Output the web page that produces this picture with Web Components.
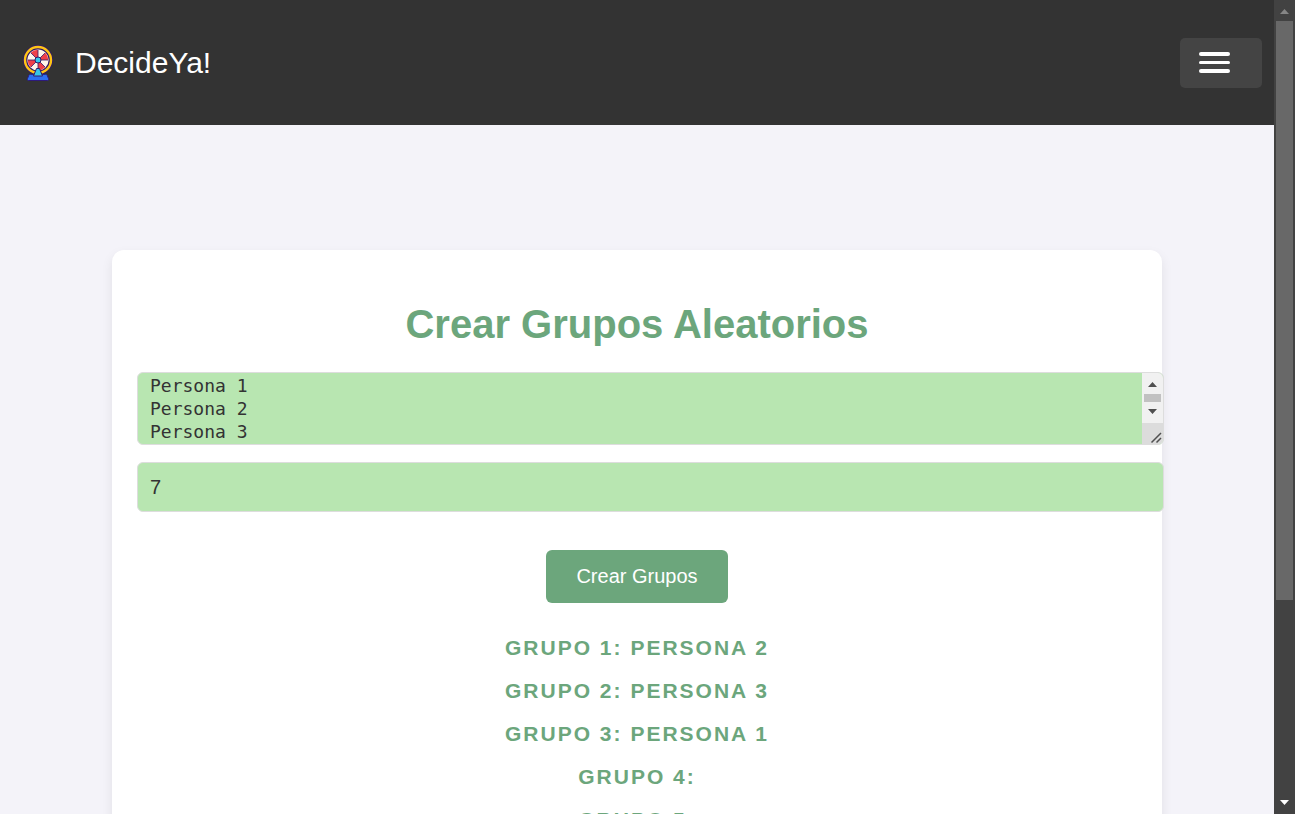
<!DOCTYPE html>
<html lang="es">
<head>
<meta charset="utf-8">
<title>DecideYa!</title>
<style>
body { margin: 0; font-family: "Liberation Sans", Arial, sans-serif; color: #333; }
</style>
</head>
<body>
<decide-app></decide-app>

<template id="t-app">
  <style>
    :host { display: flex; height: 100vh; overflow: hidden; background: #f4f3f9; }
    .page { flex: 1; min-width: 0; overflow: hidden; display: flex; flex-direction: column; }
    main { flex: 1; min-height: 0; padding: 125px 112px 0; }
  </style>
  <div class="page">
    <site-header></site-header>
    <main>
      <group-card>
        <span slot="title">Crear Grupos Aleatorios</span>
        <group-result>Grupo 1: Persona 2</group-result>
        <group-result>Grupo 2: Persona 3</group-result>
        <group-result>Grupo 3: Persona 1</group-result>
        <group-result>Grupo 4:</group-result>
        <group-result>Grupo 5:</group-result>
      </group-card>
    </main>
  </div>
  <page-scrollbar></page-scrollbar>
</template>

<template id="t-header">
  <style>
    :host { display: flex; align-items: center; justify-content: space-between; height: 125px; box-sizing: border-box; padding: 0 12px 0 20px; background: #333; flex: none; }
    a { display: flex; align-items: center; gap: 19px; color: #fff; text-decoration: none; font-size: 30px; line-height: 36px; }
    svg { display: block; }
    button { display: flex; align-items: center; width: 82px; height: 50px; margin: 0; padding: 0 0 0 19px; border: 0; border-radius: 5px; background: #444; }
  </style>
  <a href="#">
    <svg width="36" height="36" viewBox="0 0 36 36" aria-hidden="true">
      <path d="M8.500 35.500c-1.200 0-1.400-1-1-2l1.200-3c.3-.8 1-1.200 1.800-1.200h15c.8 0 1.500.4 1.800 1.200l1.200 3c.4 1 .2 2-1 2z" fill="#2b6ff0" stroke="#2d1a7b" stroke-width="1"/>
      <circle cx="18" cy="15" r="12.800" fill="#fff4e8" stroke="#331a68" stroke-width="4.400"/>
      <circle cx="18" cy="15" r="13" fill="none" stroke="#ffc515" stroke-width="2.400"/>
      <g fill="#ef4048">
        <path d="M18 15L10.700 7.700A10.300 10.300 0 0 1 18 4.700z"/>
        <path d="M18 15L25.300 7.700A10.300 10.300 0 0 1 28.300 15z"/>
        <path d="M18 15L25.300 22.300A10.300 10.300 0 0 1 18 25.300z"/>
        <path d="M18 15L10.700 22.300A10.300 10.300 0 0 1 7.700 15z"/>
      </g>
      <path d="M8 15h20M18 5v20M11 8l14 14M25 8L11 22" stroke="#331a68" stroke-width=".8"/>
      <path d="M16.500 23.500h3l3 7.500h-9z" fill="#35c7e8" stroke="#331a68" stroke-width="1"/>
      <circle cx="18" cy="15" r="3" fill="#35c7e8" stroke="#331a68" stroke-width="1"/>
    </svg>
    <span>DecideYa!</span>
  </a>
  <button type="button" aria-label="Menú">
    <svg width="31" height="22" viewBox="0 0 31 22" fill="#fff" aria-hidden="true">
      <rect width="31" height="4" rx="2"/><rect y="9" width="31" height="3" rx="1.500"/><rect y="17" width="31" height="4" rx="2"/>
    </svg>
  </button>
</template>

<template id="t-card">
  <style>
    :host { display: block; box-sizing: border-box; padding: 50px 25px; border-radius: 12px; background: #fff; box-shadow: 0 5px 12px rgba(0, 0, 0, .08); }
    h1 { margin: 0 0 24px; font-size: 40px; line-height: 48px; text-align: center; color: #6ca67c; }
    people-box { margin-bottom: 17px; }
    input { display: block; box-sizing: content-box; width: 100%; height: 48px; margin: 0; padding: 0 13px 0 12px; border: 1px solid #ddd; border-radius: 6px; background: #b8e6b1; color: #333; font: 20px "Liberation Sans", Arial, sans-serif; appearance: textfield; outline: 0; }
    input::-webkit-inner-spin-button { appearance: none; margin: 0; }
    button { display: block; height: 53px; margin: 38px auto 23px; padding: 0 30px; border: 0; border-radius: 6px; background: #6ca67c; color: #fff; font: 20px "Liberation Sans", Arial, sans-serif; }
  </style>
  <h1><slot name="title"></slot></h1>
  <people-box></people-box>
  <input type="number" value="7" aria-label="Número de grupos">
  <button type="button">Crear Grupos</button>
  <section><slot></slot></section>
</template>

<template id="t-people">
  <style>
    :host { display: flex; box-sizing: content-box; width: 100%; height: 71px; padding: 0 13px 0 12px; border: 1px solid #ddd; border-radius: 6px; background: #b8e6b1; overflow: hidden; }
    textarea { flex: 1; min-width: 0; box-sizing: border-box; height: 71px; margin: 0; padding: 1px 0; border: 0; outline: 0; background: transparent; color: #333; font: 18px/23px "DejaVu Sans Mono", monospace; resize: none; overflow: hidden; }
    .bar { flex: none; width: 21px; margin-right: -13px; background: #f1f1f1; }
    svg { display: block; }
  </style>
  <textarea aria-label="Personas">Persona 1
Persona 2
Persona 3</textarea>
  <div class="bar">
    <svg width="21" height="71" aria-hidden="true">
      <path d="M6 14h9l-4.500-5zM6 36h9l-4.500 5z" fill="#505050"/>
      <path d="M2 21h17v8H2z" fill="#c1c1c1"/>
      <path d="M0 50h21v21H0z" fill="#dcdcdc"/>
      <path d="M9.500 69.500l9.500-9.500M14.500 69.500l4.500-4.500" stroke="#505050" stroke-width="1.500"/>
    </svg>
  </div>
</template>

<template id="t-result">
  <style>
    :host { display: block; padding: 10px 0; font-size: 21px; line-height: 23px; font-weight: bold; letter-spacing: 2px; text-align: center; text-transform: uppercase; color: #6ca67c; }
  </style>
  <slot></slot>
</template>

<template id="t-scrollbar">
  <style>
    :host { display: flex; flex-direction: column; flex: none; width: 21px; background: #424242; }
    svg { display: block; flex: none; }
    .track { flex: 1; padding: 0 2px; }
    .thumb { height: 75%; background: #686868; }
  </style>
  <svg width="21" height="21" aria-hidden="true"><path d="M6 14h9l-4.500-5z" fill="#868686"/></svg>
  <div class="track"><div class="thumb"></div></div>
  <svg width="21" height="21" aria-hidden="true"><path d="M6 7h9l-4.500 5z" fill="#fff"/></svg>
</template>

<script>
function define(name, id) {
  customElements.define(name, class extends HTMLElement {
    constructor() {
      super();
      this.attachShadow({ mode: "open" }).append(document.getElementById(id).content.cloneNode(true));
    }
  });
}
define("group-result", "t-result");
define("people-box", "t-people");
define("group-card", "t-card");
define("site-header", "t-header");
define("page-scrollbar", "t-scrollbar");
define("decide-app", "t-app");
</script>
</body>
</html>
